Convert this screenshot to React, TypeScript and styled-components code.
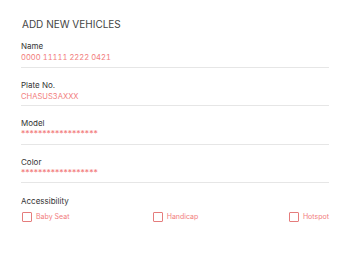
import styled, { createGlobalStyle } from "styled-components";

const GlobalStyle = createGlobalStyle`
  body {
    margin: 0;
    background: #ffffff;
    font-family: Inter, "Noto Sans", sans-serif;
  }
`;

const fields = [
  { label: "Name", value: "0000 11111 2222 0421", masked: false },
  { label: "Plate No.", value: "CHASUS3AXXX", masked: false },
  { label: "Model", value: "******************", masked: true },
  { label: "Color", value: "******************", masked: true },
];

const options = ["Baby Seat", "Handicap", "Hotspot"];

const App: React.FC = () => {
  return (
    <>
      <GlobalStyle />
      <Page>
        <Title>ADD NEW VEHICLES</Title>
        {fields.map((f) => (
          <Field key={f.label}>
            <Label>{f.label}</Label>
            <Value $masked={f.masked}>{f.value}</Value>
          </Field>
        ))}
        <Accessibility>
          <Label>Accessibility</Label>
          <Options>
            {options.map((o) => (
              <Option key={o}>
                <Box />
                <OptionText>{o}</OptionText>
              </Option>
            ))}
          </Options>
        </Accessibility>
      </Page>
    </>
  );
};
export default App;

const Page = styled.div`
  width: 350px;
  height: 263px;
  box-sizing: border-box;
  padding: 18px 21px 0 21px;
  display: flex;
  flex-direction: column;
`;

const Title = styled.div`
  font-size: 10px;
  line-height: 12px;
  color: #444444;
  padding-left: 1px;
  margin-bottom: 11px;
`;

const Field = styled.div`
  display: flex;
  flex-direction: column;
  padding-bottom: 3.5px;
  border-bottom: 1px solid #e6e6e6;
  margin-bottom: 12px;
`;

const Label = styled.div`
  font-size: 8px;
  line-height: 11px;
  color: #333333;
`;

const Value = styled.div<{ $masked: boolean }>`
  font-size: ${(p) => (p.$masked ? "8.5px" : "7.6px")};
  line-height: 11px;
  color: #f27d7d;
  font-variant-numeric: ${(p) => (p.$masked ? "normal" : "tabular-nums")};
`;

const Accessibility = styled.div`
  display: flex;
  flex-direction: column;
  margin-top: 1px;
`;

const Options = styled.div`
  display: grid;
  grid-template-columns: 1fr 1fr 1fr;
  margin-top: 5px;
  padding-left: 1px;

  & > :nth-child(2) {
    justify-self: center;
  }
  & > :nth-child(3) {
    justify-self: end;
  }
`;

const Option = styled.div`
  display: flex;
  align-items: center;
  gap: 4px;
`;

const Box = styled.div`
  width: 8px;
  height: 8px;
  border: 1px solid #e57c7c;
  border-radius: 1px;
`;

const OptionText = styled.span`
  font-size: 7px;
  line-height: 10px;
  color: #f27d7d;
`;
